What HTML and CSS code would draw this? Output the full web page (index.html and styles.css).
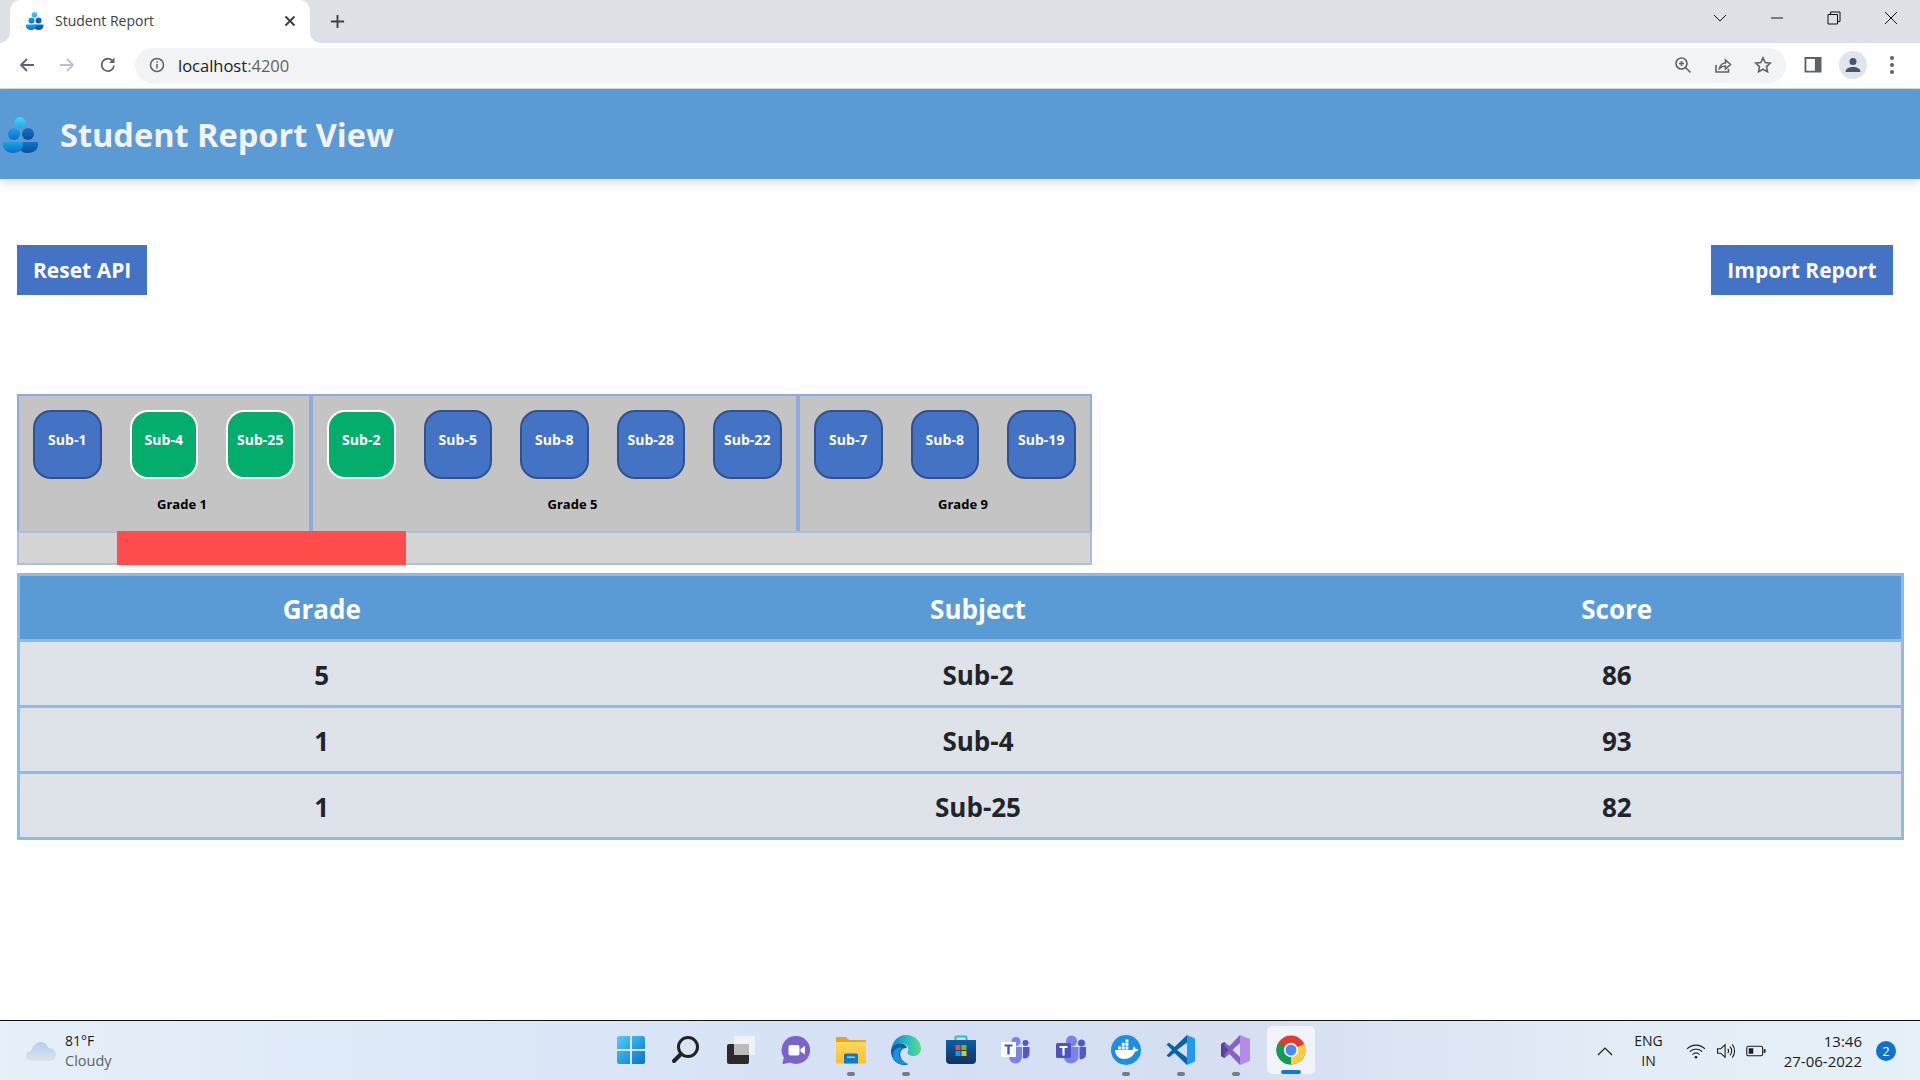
FILE: index.html
```html
<!DOCTYPE html>
<html lang="en-us">
<head>
<meta charset="UTF-8">
<title>Student Report</title>
<link rel="stylesheet" href="styles.css">
</head>
<body>
<!-- shared gradients and the people logo -->
<svg class="defs" width="0" height="0">
  <defs>
    <linearGradient id="gCyan" x1="0" y1="0" x2="0" y2="1"><stop offset="0" stop-color="#45d9f7"/><stop offset="1" stop-color="#1fa5ea"/></linearGradient>
    <linearGradient id="gMid" x1="0" y1="0" x2="0" y2="1"><stop offset="0" stop-color="#1ba1ea"/><stop offset="1" stop-color="#0b6fc7"/></linearGradient>
    <linearGradient id="gDark" x1="0" y1="0" x2="0" y2="1"><stop offset="0" stop-color="#1273c4"/><stop offset="1" stop-color="#0b4f9c"/></linearGradient>
    <linearGradient id="gWin" x1="0" y1="0" x2="1" y2="1"><stop offset="0" stop-color="#4fd0fb"/><stop offset="1" stop-color="#0672c9"/></linearGradient>
    <linearGradient id="gCloud" x1="0" y1="0" x2="0" y2="1"><stop offset="0" stop-color="#b4cef3"/><stop offset="1" stop-color="#dbe4ea"/></linearGradient>
    <linearGradient id="gFolder" x1="0" y1="0" x2="0" y2="1"><stop offset="0" stop-color="#ffd860"/><stop offset="1" stop-color="#fbbf2e"/></linearGradient>
    <linearGradient id="gStore" x1="0" y1="0" x2="0" y2="1"><stop offset="0" stop-color="#0a5fa8"/><stop offset="1" stop-color="#13325f"/></linearGradient>
    <linearGradient id="gEdge" x1="0" y1="0" x2="1" y2="0"><stop offset="0" stop-color="#0d7fd0"/><stop offset="0.6" stop-color="#2bc3c0"/><stop offset="1" stop-color="#5fdc7a"/></linearGradient>
    <symbol id="people" viewBox="0 0 36 36">
      <circle cx="17" cy="5.6" r="5.6" fill="url(#gCyan)"/>
      <circle cx="25" cy="17" r="6" fill="url(#gDark)"/>
      <circle cx="11" cy="17" r="6" fill="url(#gMid)"/>
      <path d="M16 25h18a1 1 0 0 1 1 1v2c0 5-5 8-10 8-4 0-9-2-9-6z" fill="url(#gDark)"/>
      <path d="M1 25h18a1 1 0 0 1 1 1v2c0 5-5 8-10 8-5 0-10-3-10-8v-2a1 1 0 0 1 1-1z" fill="url(#gMid)"/>
    </symbol>
  </defs>
</svg>

<div class="tabstrip">
  <div class="tab">
    <svg class="tab-icon"><use href="#people"/></svg>
    <span class="tab-title">Student Report</span>
    <svg class="tab-close" viewBox="0 0 12 12"><path d="M1.5 1.5l9 9M10.5 1.5l-9 9"/></svg>
  </div>
  <svg class="new-tab" viewBox="0 0 16 16"><path d="M8 1v14M1 8h14"/></svg>
  <div class="window-controls">
    <svg class="win-btn" viewBox="0 0 16 16"><path d="M2 5l6 6 6-6"/></svg>
    <svg class="win-btn" viewBox="0 0 16 16"><path d="M2 8h12"/></svg>
    <svg class="win-btn" viewBox="0 0 16 16"><path d="M2 4.5h9.5v9.5H2zM4.5 4.500V2H14v9.500h-2.500"/></svg>
    <svg class="win-btn" viewBox="0 0 16 16"><path d="M2 2l12 12M14 2L2 14"/></svg>
  </div>
</div>

<div class="toolbar">
  <svg class="nav-icon" viewBox="0 0 18 18"><path d="M16 9H3M9 3L3 9l6 6"/></svg>
  <svg class="nav-icon nav-off" viewBox="0 0 18 18"><path d="M2 9h13M9 3l6 6-6 6"/></svg>
  <svg class="nav-icon nav-reload" viewBox="0 0 18 18"><path d="M15 9.500A6.200 6.200 0 1 1 13.200 4.500"/><path class="solid" d="M15.500 1.500v5.500h-5.500z"/></svg>
  <div class="omnibox">
    <svg class="info" viewBox="0 0 16 16"><circle cx="8" cy="8" r="6.500"/><path d="M8 7v4.500M8 4.200v1.500"/></svg>
    <span class="url">localhost<span class="url-dim">:4200</span></span>
    <div class="omni-actions">
      <svg class="omni-icon" viewBox="0 0 18 18"><circle cx="7.500" cy="7.500" r="5.500"/><path d="M11.500 11.500l5 5M7.500 5v5M5 7.500h5"/></svg>
      <svg class="omni-icon" viewBox="0 0 18 18"><path d="M2 9v7h12.500v-3M5.500 12.500c.5-3 3-5.500 6-5.500V4l5 4.500-5 4.500v-3c-2.500 0-4.500 1-6 2.500z"/></svg>
      <svg class="omni-icon" viewBox="0 0 18 18"><path d="M9 1.800l2.200 4.700 5.100.6-3.800 3.500 1 5.100L9 13.200l-4.500 2.500 1-5.100-3.800-3.500 5.100-.6z"/></svg>
    </div>
  </div>
  <svg class="panel-icon" viewBox="0 0 18 18"><path fill-rule="evenodd" d="M0 0h18v16.500H0zM2 2v12.500h9V2z"/></svg>
  <div class="avatar"><svg viewBox="0 0 16 16"><circle cx="8" cy="4.500" r="3.500"/><path d="M0.500 15c0-3.500 3.500-5 7.500-5s7.500 1.500 7.500 5z"/></svg></div>
  <div class="dots"><i></i><i></i><i></i></div>
</div>

<header class="app-header">
  <svg class="logo"><use href="#people"/></svg>
  <h1>Student Report View</h1>
</header>

<main class="page">
  <div class="actions">
    <button class="btn">Reset API</button>
    <button class="btn btn-wide">Import Report</button>
  </div>

  <div class="selector">
    <div class="grades">
      <section class="grade">
        <div class="subjects">
          <div class="sub">Sub-1</div>
          <div class="sub picked">Sub-4</div>
          <div class="sub picked">Sub-25</div>
        </div>
        <div class="grade-name">Grade 1</div>
      </section>
      <section class="grade">
        <div class="subjects">
          <div class="sub picked">Sub-2</div>
          <div class="sub">Sub-5</div>
          <div class="sub">Sub-8</div>
          <div class="sub">Sub-28</div>
          <div class="sub">Sub-22</div>
        </div>
        <div class="grade-name">Grade 5</div>
      </section>
      <section class="grade">
        <div class="subjects">
          <div class="sub">Sub-7</div>
          <div class="sub">Sub-8</div>
          <div class="sub">Sub-19</div>
        </div>
        <div class="grade-name">Grade 9</div>
      </section>
    </div>
    <div class="track"><div class="track-fill" style="left: 98px; width: 289px"></div></div>
  </div>

  <table class="report">
    <colgroup><col class="col-grade"><col class="col-subject"><col class="col-score"></colgroup>
    <thead>
      <tr><th>Grade</th><th>Subject</th><th>Score</th></tr>
    </thead>
    <tbody>
      <tr><td>5</td><td>Sub-2</td><td>86</td></tr>
      <tr><td>1</td><td>Sub-4</td><td>93</td></tr>
      <tr><td>1</td><td>Sub-25</td><td>82</td></tr>
    </tbody>
  </table>
</main>

<footer class="taskbar">
  <div class="weather">
    <svg class="cloud" viewBox="0 0 30 20"><path fill="url(#gCloud)" d="M5.500 20C2.500 20 0 17.800 0 15s2-4.800 5-5.200C6 6 10 1 15 1c4 0 6.500 3 7.500 6 4-.3 7.500 2.800 7.500 6.500 0 3.800-3 6.500-6.500 6.500z"/></svg>
    <div class="weather-text"><div>81°F</div><div class="weather-sub">Cloudy</div></div>
  </div>

  <div class="apps">
    <div class="app"><svg viewBox="0 0 30 30"><path fill="url(#gWin)" d="M1 3a2 2 0 0 1 2-2h11v13H1zM16 1h11a2 2 0 0 1 2 2v11H16zM1 16h13v13H3a2 2 0 0 1-2-2zM16 16h13v11a2 2 0 0 1-2 2H16z"/></svg></div>
    <div class="app"><svg viewBox="0 0 30 30"><circle cx="17" cy="12" r="9.500" fill="none" stroke="#222" stroke-width="3"/><path d="M10 19l-7 7" stroke="#222" stroke-width="4" stroke-linecap="round"/></svg></div>
    <div class="app"><svg viewBox="0 0 30 30"><rect x="1" y="9" width="22" height="20" rx="2" fill="#2b2b2b"/><rect x="8" y="1" width="21" height="19" rx="2" fill="#f4f5f8" fill-opacity=".85"/><rect x="8" y="9" width="15" height="11" fill="#bbb"/></svg></div>
    <div class="app"><svg viewBox="0 0 30 30"><path fill="#7a63c9" d="M15 1a14 14 0 1 1-6 26.600L2.500 29c-.8.100-1.200-.4-1-1l1.300-5.500A14 14 0 0 1 15 1z"/><rect x="7.500" y="10" width="11" height="10.500" rx="2" fill="#fff"/><path d="M19.500 14l4.500-3v8.500l-4.500-3z" fill="#fff"/></svg></div>
    <div class="app app-run"><svg viewBox="0 0 30 30"><path fill="#e9a61d" d="M0 3a1 1 0 0 1 1-1h9l3 3h16a1 1 0 0 1 1 1v6H0z"/><path fill="url(#gFolder)" d="M0 7h30v20.500a1 1 0 0 1-1 1H1a1 1 0 0 1-1-1z"/><path fill="#0f78c9" d="M8 20a1.500 1.500 0 0 1 1.500-1.500h11A1.500 1.500 0 0 1 22 20v8.500H8z"/><rect x="11" y="21.500" width="8" height="1.500" fill="#9fd4f6"/></svg></div>
    <div class="app app-run"><svg viewBox="0 0 30 30"><path fill="url(#gEdge)" d="M15 0c8.500 0 15 6 15 13.500 0 5-3.500 7.500-7.500 7.500-3 0-6-1.300-6-3.500 0-1 .8-1.500.8-3.500 0-3-3-5.500-6.300-5.500C5 8.500 1 13 0 18 0 8 6 0 15 0z"/><path fill="#0b5fa6" d="M0 16c1-5 5-7.500 9.500-7.500 3.500 0 6 2 6.300 4.500-4-.5-7 3-6.500 7 .4 4 3.500 7.500 8 9.500C8 31.500 0 26 0 16z"/><path fill="#1b8fd8" d="M2 21c0-5 3.200-8.500 7-8.500 1 0 2 .2 3 .7-3 1-4.500 4-3.700 7.300.8 3.500 4 6.500 9.200 8.500C9 30.500 2 27 2 21z"/></svg></div>
    <div class="app"><svg viewBox="0 0 30 30"><path d="M9.500 5V2.500a1 1 0 0 1 1-1h9a1 1 0 0 1 1 1V5" fill="none" stroke="#31b5e8" stroke-width="2"/><path fill="url(#gStore)" d="M0 5h30v20a4 4 0 0 1-4 4H4a4 4 0 0 1-4-4z"/><rect x="9.500" y="10" width="5" height="5" fill="#f25022"/><rect x="15.500" y="10" width="5" height="5" fill="#7fba00"/><rect x="9.500" y="16" width="5" height="5" fill="#00a4ef"/><rect x="15.500" y="16" width="5" height="5" fill="#ffb900"/></svg></div>
    <div class="app"><svg viewBox="0 0 30 30"><circle cx="15" cy="6.500" r="4.500" fill="#7b83eb"/><circle cx="24.500" cy="8" r="3" fill="#5059c9"/><path fill="#7b83eb" d="M8 12h13v10a6.500 6.500 0 0 1-13 0z"/><path fill="#5059c9" d="M22 12h6.500v7a4.500 4.500 0 0 1-6.500 4z"/><rect x="0" y="7" width="15" height="15" fill="#fff"/><path fill="#4b53bc" d="M3.500 9.500h8v2H8.700v8H6.300v-8H3.500z"/></svg></div>
    <div class="app"><svg viewBox="0 0 30 30"><circle cx="15.500" cy="6" r="5.500" fill="#7b83eb"/><circle cx="25.500" cy="8" r="3.500" fill="#5059c9"/><path fill="#7b83eb" d="M8 12h14.500v9.500a7.500 7.500 0 0 1-14.500 2z"/><path fill="#5059c9" d="M23.500 12H30v7.500a5 5 0 0 1-6.500 4.500z"/><rect x="0" y="8" width="15" height="15" rx="1.500" fill="#4b53bc"/><path fill="#fff" d="M3.500 11h8v2H8.600v7.500H6.400V13H3.500z"/></svg></div>
    <div class="app app-run"><svg viewBox="0 0 30 30"><circle cx="15" cy="15" r="15" fill="#1d8fe1"/><path fill="#fff" d="M4 15h17.500c.500-2 1-3 1.500-3.500 1 .7 1.500 1.700 1.700 2.700 1 -.3 2-.2 2.800.4-.7 1.400-2 2-3.500 2-1.500 4.500-5.500 7.400-11 7.400-5.500 0-8.500-3.500-9-9z"/><path fill="#fff" d="M7 11.500h3v3H7zM10.700 11.500h3v3h-3zM14.400 11.500h3v3h-3zM10.700 7.800h3v3h-3zM14.400 7.800h3v3h-3zM14.400 4.500h3v2.800h-3z"/></svg></div>
    <div class="app app-run"><svg viewBox="0 0 30 30"><path fill="#1f9cf0" d="M21 0l8 3.500v23L21 30z"/><path fill="#0065a9" d="M21 0L8.500 12 3 7.800 .5 9.500 6 15 .5 20.500 3 22.200 8.500 18 21 30v-7.500L11 15l10-7.500z"/></svg></div>
    <div class="app app-run"><svg viewBox="0 0 30 30"><path fill="#b58de8" d="M19 0l10 4v22l-10 4z"/><path fill="#8661c5" d="M19 0L8.500 11 3.500 7 0 9v12l3.500 2 5-4L19 30v-8l-7.500-7L19 8z"/><path fill="#5b3f93" d="M3.500 11l4 4-4 4z" /><path fill="#5b3f93" d="M0 9l3.500-2v16L0 21z"/></svg></div>
    <div class="app app-active"><svg viewBox="0 0 30 30"><circle cx="15" cy="15" r="14.500" fill="#e33b2e"/><path fill="#ffcd40" d="M15 15l13.200-6A14.500 14.500 0 0 1 15 29.500z"/><path fill="#0f9d58" d="M15 15L15 29.500A14.500 14.500 0 0 1 2.400 7.700z"/><circle cx="15" cy="15" r="7.200" fill="#fff"/><circle cx="15" cy="15" r="5.500" fill="#4a8af4"/></svg></div>
  </div>

  <div class="tray">
    <svg class="tray-chevron" viewBox="0 0 16 10"><path d="M1 9l7-7 7 7"/></svg>
    <div class="lang"><div>ENG</div><div>IN</div></div>
    <svg class="tray-icon" viewBox="0 0 22 18"><path d="M1 6.500c5.500-5.500 14.500-5.500 20 0M4 9.800c4-4 10-4 14 0M7 13c2.500-2.300 5.500-2.300 8 0"/><circle class="dot-fill" cx="11" cy="16" r="1.500"/></svg>
    <svg class="tray-icon tray-vol" viewBox="0 0 22 18"><path d="M1.500 6.500h3.500L10 2v14l-5-4.500H1.500zM13 6.500c1.200 1.500 1.200 3.500 0 5M15.500 4c2.400 3 2.400 7 0 10M18 1.500c3.600 4.500 3.600 10.500 0 15"/></svg>
    <svg class="tray-icon tray-batt" viewBox="0 0 22 14"><rect x=".8" y="1.800" width="17.500" height="10.500" rx="2"/><rect class="dot-fill" x="3" y="4" width="5" height="6"/><path class="dot-fill" d="M19.500 5h2v4h-2z"/></svg>
    <div class="clock"><div>13:46</div><div>27-06-2022</div></div>
    <div class="badge">2</div>
  </div>
</footer>
</body>
</html>
```

FILE: styles.css
```css
* {
  box-sizing: border-box;
}

html, body {
  height: 100%;
}

body {
  margin: 0;
  display: flex;
  flex-direction: column;
  height: 100vh;
  overflow: hidden;
  background: #fff;
  font-family: "Open Sans", "Noto Sans", sans-serif;
}

.defs {
  position: absolute;
}

/* browser chrome */
.tabstrip {
  display: flex;
  align-items: flex-end;
  height: 43px;
  background: #dee1e6;
  flex: none;
}

.tab {
  position: relative;
  display: flex;
  align-items: center;
  width: 300px;
  height: 43px;
  margin-left: 10px;
  padding: 0 16px 2px;
  background: #fff;
  border-radius: 10px 10px 0 0;
}

/* the little flares at the foot of the active tab */
.tab::before, .tab::after {
  content: "";
  position: absolute;
  bottom: 0;
  width: 10px;
  height: 10px;
}

.tab::before {
  left: -10px;
  background: radial-gradient(circle at 0 0, #dee1e6 9.500px, #fff 10px);
}

.tab::after {
  right: -10px;
  background: radial-gradient(circle at 100% 0, #dee1e6 9.500px, #fff 10px);
}

.tab-icon {
  width: 18px;
  height: 18px;
  flex: none;
}

.tab-title {
  margin-left: 11px;
  font-size: 14px;
  color: #3c4043;
  flex: 1;
}

.tab-close {
  width: 12px;
  height: 12px;
  fill: none;
  stroke: #3c4043;
  stroke-width: 2;
  margin-right: -2px;
}

.new-tab {
  width: 15px;
  height: 15px;
  margin: 0 0 14px 20px;
  fill: none;
  stroke: #3c4043;
  stroke-width: 2;
}

.window-controls {
  display: flex;
  margin-left: auto;
  align-self: flex-start;
  padding: 10px 21px 0 0;
  gap: 41px;
}

.win-btn {
  width: 16px;
  height: 16px;
  fill: none;
  stroke: #111;
  stroke-width: 1;
}

.toolbar {
  display: flex;
  align-items: center;
  height: 46px;
  padding: 0 0 1px 18px;
  background: #fff;
  border-bottom: 1px solid #dadce0;
  flex: none;
}

.nav-icon {
  width: 18px;
  height: 18px;
  margin-right: 22px;
  fill: none;
  stroke: #5f6368;
  stroke-width: 1.8;
  flex: none;
}

.nav-off {
  stroke: #bdc1c6;
}

.nav-reload {
  margin-left: 1px;
}

.solid {
  fill: #5f6368;
  stroke: none;
}

.omnibox {
  display: flex;
  align-items: center;
  width: 1651px;
  height: 35px;
  margin-left: -4px;
  padding: 0 14px 0 14px;
  background: #f1f3f4;
  border-radius: 18px;
  flex: none;
}

.info {
  width: 16px;
  height: 16px;
  fill: none;
  stroke: #5f6368;
  stroke-width: 1.500;
}

.url {
  margin-left: 13px;
  font-size: 16.500px;
  color: #202124;
}

.url-dim {
  color: #5f6368;
}

.omni-actions {
  display: flex;
  gap: 22px;
  margin-left: auto;
}

.omni-icon {
  width: 18px;
  height: 18px;
  fill: none;
  stroke: #5f6368;
  stroke-width: 1.600;
}

.panel-icon {
  width: 18px;
  height: 17px;
  margin-left: 18px;
  fill: #5f6368;
  flex: none;
}

.avatar {
  display: flex;
  align-items: center;
  justify-content: center;
  width: 28px;
  height: 28px;
  margin-left: 17px;
  border-radius: 50%;
  background: #e1e4ea;
  flex: none;
}

.avatar svg {
  width: 16px;
  height: 16px;
  fill: #46566e;
}

.dots {
  display: flex;
  flex-direction: column;
  gap: 3px;
  margin-left: 23px;
}

.dots i {
  width: 4px;
  height: 4px;
  border-radius: 50%;
  background: #5f6368;
}

/* app */
.app-header {
  display: flex;
  align-items: center;
  height: 90px;
  padding-left: 3px;
  background: #5b9bd5;
  box-shadow: 0 4px 10px rgba(0, 0, 0, 0.13);
  flex: none;
}

.logo {
  width: 36px;
  height: 36px;
  margin-top: 1px;
}

.app-header h1 {
  margin: 0 0 0 21px;
  font-size: 32.500px;
  font-weight: 700;
  color: #f2f2f2;
}

.page {
  flex: 1;
  padding: 66px 16px 0 17px;
  overflow: hidden;
}

.actions {
  display: flex;
  justify-content: space-between;
  padding-right: 11px;
}

.btn {
  height: 50px;
  padding: 0 16px;
  border: none;
  background: #4472c4;
  color: #fff;
  font-family: inherit;
  font-size: 21px;
  font-weight: 700;
}

.btn-wide {
  padding: 0 16.500px;
}

.selector {
  width: 1075px;
  margin-top: 99px;
}

.grades {
  display: flex;
  height: 137px;
  border: solid #8faadc;
  border-width: 2px 2px 0;
  background: #c4c4c4;
}

.grade {
  padding-top: 14px;
}

.grade + .grade {
  border-left: 4px solid #8faadc;
}

.subjects {
  display: flex;
  gap: 28px;
  padding: 0 14.500px 0 14px;
}

.sub {
  display: flex;
  justify-content: center;
  width: 68.500px;
  height: 69px;
  padding-top: 18px;
  border: 2px solid #2f528f;
  border-radius: 18px;
  background: #4472c4;
  color: #fff;
  font-size: 14px;
  font-weight: 700;
}

.sub.picked {
  border-color: #fff;
  background: #04ad6b;
}

.grade-name {
  margin-top: 16px;
  padding-left: 36px;
  text-align: center;
  font-size: 13px;
  font-weight: 700;
  color: #000;
}

.track {
  position: relative;
  height: 34px;
  border: 2px solid #adbfdf;
  background: #d4d4d4;
}

.track-fill {
  position: absolute;
  top: -2px;
  bottom: -2px;
  background: #ff4d4d;
}

.report {
  width: 1887px;
  margin-top: 8px;
  border-collapse: collapse;
  table-layout: fixed;
  border: 3px solid #8fbae3;
}

.col-grade {
  width: 605px;
}

.col-subject {
  width: 709px;
}

.report th, .report td {
  height: 66px;
  padding: 2px 0 0;
  border: solid #8fbae3;
  border-width: 3px 0;
  text-align: center;
  font-size: 26px;
  font-weight: 700;
}

.report th {
  background: #5b9bd5;
  color: #fff;
}

.report td {
  background: #dee2e9;
  color: #212529;
}

/* windows taskbar */
.taskbar {
  display: grid;
  grid-template-columns: 1fr auto 1fr;
  align-items: center;
  height: 60px;
  border-top: 1px solid #111;
  background: linear-gradient(to right, #e6f0f9 0%, #dce7f8 25%, #d5dff4 50%, #d6dff1 65%, #e3edf7 85%, #e6f0f8 100%);
  flex: none;
}

.weather {
  display: flex;
  align-items: center;
  padding-left: 26px;
  font-size: 14px;
  line-height: 20px;
  color: #1b1b1b;
}

.cloud {
  width: 30px;
  height: 20px;
  margin-right: 9px;
}

.weather-sub {
  font-size: 14.500px;
  color: #5b5f66;
}

.apps {
  display: flex;
  gap: 7px;
  margin: 0 0 2px 1px;
}

.app {
  position: relative;
  display: flex;
  align-items: center;
  justify-content: center;
  width: 48px;
  height: 48px;
  border-radius: 5px;
}

.app svg {
  width: 30px;
  height: 30px;
}

.app-run::after, .app-active::after {
  content: "";
  position: absolute;
  left: 50%;
  bottom: -2px;
  width: 8px;
  height: 4px;
  margin-left: -4px;
  border-radius: 2px;
  background: #787b80;
}

.app-active {
  background: #f0f4fa;
}

.app-active::after {
  width: 20px;
  margin-left: -10px;
  bottom: 0;
  background: #0f7ad8;
}

.tray {
  display: flex;
  align-items: center;
  justify-content: flex-end;
  padding-right: 24px;
  font-size: 14px;
  line-height: 20px;
  color: #1b1b1b;
}

.tray-chevron {
  width: 16px;
  height: 10px;
  margin-right: 21px;
  fill: none;
  stroke: #1b1b1b;
  stroke-width: 1.200;
}

.lang {
  margin-right: 23px;
  text-align: center;
}

.tray-icon {
  width: 20px;
  height: 16px;
  margin-right: 10px;
  fill: none;
  stroke: #1b1b1b;
  stroke-width: 1.200;
}

.dot-fill {
  fill: #1b1b1b;
  stroke: none;
}

.clock {
  margin-left: 8px;
  font-size: 15px;
  text-align: right;
}

.badge {
  width: 20px;
  height: 20px;
  margin-left: 14px;
  border-radius: 50%;
  background: #0b73cf;
  color: #fff;
  font-size: 13px;
  text-align: center;
}
```
